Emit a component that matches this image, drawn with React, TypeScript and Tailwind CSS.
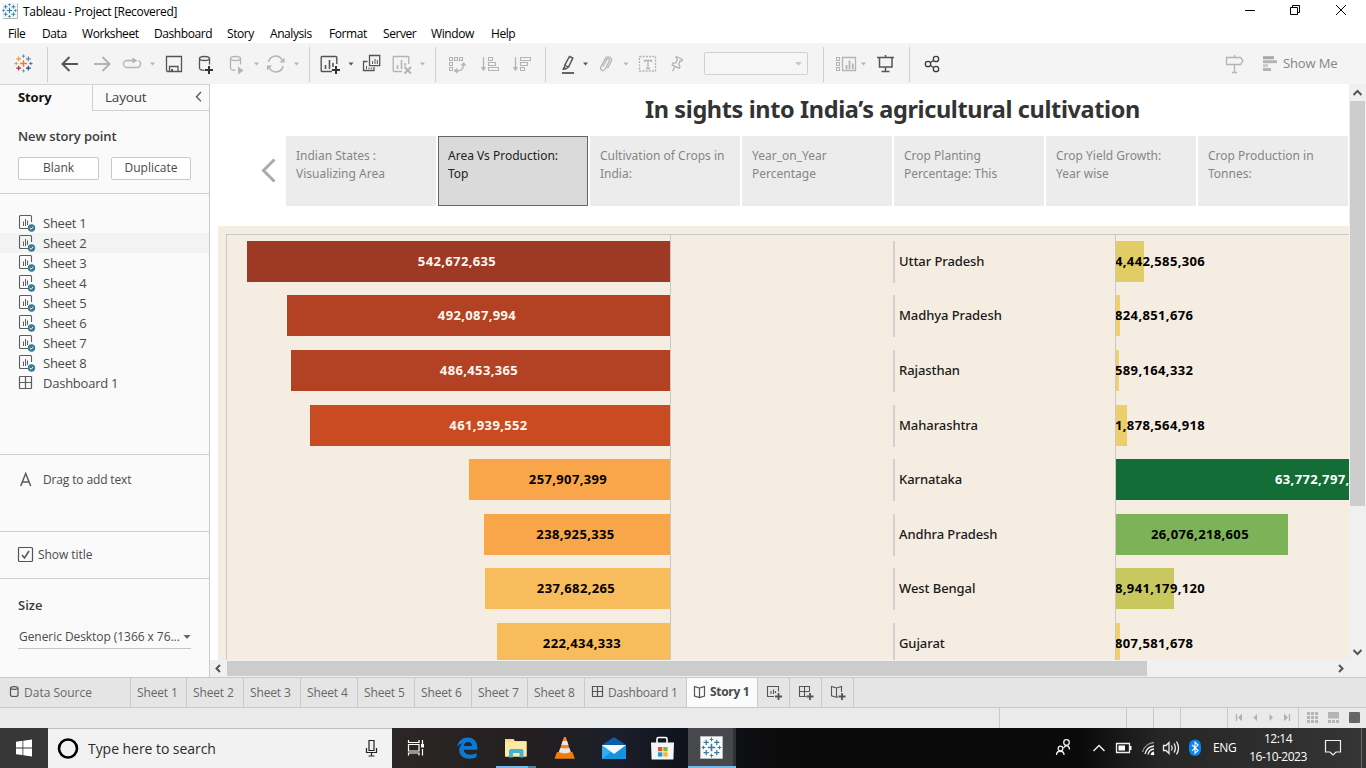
import React from "react";

/* Every glyph uses window coordinates for its viewBox, so cells line up along a bar. */
type IcProps = { x: number; y: number; w: number; h: number; c?: string; sw?: number; children: React.ReactNode };
function Ic({ x, y, w, h, c = "#555555", sw = 1.3, children }: IcProps) {
  return (
    <svg width={w} height={h} viewBox={`${x} ${y} ${w} ${h}`} fill="none" stroke={c} strokeWidth={sw} className="block shrink-0">
      {children}
    </svg>
  );
}

const DARK = "#555555";
const DIM = "#b4b4b4";

type CellProps = { x: number; w: number; c?: string; sw?: number; children?: React.ReactNode };
function Tool(p: CellProps) {
  return <Ic x={p.x} y={43} w={p.w} h={41} c={p.c} sw={p.sw}>{p.children}</Ic>;
}
function Sep({ x }: { x: number }) {
  return <path d={`M${x} 47V82`} stroke="#d0d0d0" strokeWidth="1" />;
}
function Caret({ x, c = DIM, y = 62.5 }: { x: number; c?: string; y?: number }) {
  return <path d={`M${x} ${y}h5l-2.5 3z`} fill={c} stroke="none" />;
}
function Plus({ x, y, r, c, sw }: { x: number; y: number; r: number; c: string; sw: number }) {
  return <path d={`M${x - r} ${y}h${2 * r}M${x} ${y - r}v${2 * r}`} stroke={c} strokeWidth={sw} />;
}

function TableauMark({ cx, cy, k, mono }: { cx: number; cy: number; k: number; mono?: boolean }) {
  const b = "#3d7a99";
  const col = (s: string) => (mono ? b : s);
  return (
    <g>
      <Plus x={cx} y={cy} r={3.2 * k} c={col("#e8762d")} sw={1.3 * k} />
      <Plus x={cx - 4.6 * k} y={cy - 4.4 * k} r={2.3 * k} c={col("#e89b3c")} sw={1.1 * k} />
      <Plus x={cx + 4.6 * k} y={cy - 4.4 * k} r={2.3 * k} c={col("#5b879b")} sw={1.1 * k} />
      <Plus x={cx - 4.6 * k} y={cy + 4.4 * k} r={2.3 * k} c={col("#c72035")} sw={1.1 * k} />
      <Plus x={cx + 4.6 * k} y={cy + 4.4 * k} r={2.3 * k} c={col("#1f447e")} sw={1.1 * k} />
      <Plus x={cx} y={cy - 7 * k} r={1.6 * k} c={col("#5b879b")} sw={0.9 * k} />
      <Plus x={cx} y={cy + 7 * k} r={1.6 * k} c={col("#7099a6")} sw={0.9 * k} />
      <Plus x={cx - 7 * k} y={cy} r={1.6 * k} c={col("#eb912c")} sw={0.9 * k} />
      <Plus x={cx + 7 * k} y={cy} r={1.6 * k} c={col("#5b6591")} sw={0.9 * k} />
    </g>
  );
}

function TitleBar() {
  return (
    <div className="flex h-6 shrink-0 items-start bg-white">
      <Ic x={0} y={0} w={22} h={24}>
        <rect x="2" y="3" width="15.5" height="15.5" fill="#f4f7f8" stroke="none" />
        <path d="M17.5 3.5V18.5H3" stroke="#b5b5b5" strokeWidth="1" />
        <TableauMark cx={9.5} cy={10.5} k={0.85} mono />
      </Ic>
      <span className="ml-px flex-1 pt-[3px] font-['Open_Sans','Noto_Sans',sans-serif] text-[12px] leading-[18px] tracking-[-0.32px] text-black">
        Tableau - Project [Recovered]
      </span>
      <Ic x={1226} y={0} w={140} h={24} c="#000000" sw={1}>
        <path d="M1245 10.5h10" />
        <path d="M1290.500 7.500h7v7h-7zM1292.500 7V5.500h7v7H1298" />
        <path d="M1336 5l10 10M1346 5l-10 10" />
      </Ic>
    </div>
  );
}

const menus = [
  { t: "File", c: "w-[34px]" }, { t: "Data", c: "w-10" }, { t: "Worksheet", c: "w-[72px]" }, { t: "Dashboard", c: "w-[73px]" },
  { t: "Story", c: "w-[43px]" }, { t: "Analysis", c: "w-[59px]" }, { t: "Format", c: "w-[54px]" }, { t: "Server", c: "w-12" },
  { t: "Window", c: "w-[60px]" }, { t: "Help", c: "w-10" },
];
function MenuBar() {
  return (
    <div className="flex h-[19px] shrink-0 bg-white pl-2 font-['Open_Sans','Noto_Sans',sans-serif] text-[12px] leading-5 tracking-[-0.42px] text-black">
      {menus.map((m) => <span key={m.t} className={`${m.c} shrink-0`}>{m.t}</span>)}
    </div>
  );
}

function Toolbar() {
  return (
    <div className="flex h-[41px] shrink-0 items-center bg-[#f4f4f4]">
      <Tool x={0} w={52}><TableauMark cx={23.500} cy={63.500} k={1.05} /><Sep x={47.500} /></Tool>
      <Tool x={52} w={34} sw={2}><path d="M63 64h15M69.500 57l-7 7 7 7" /></Tool>
      <Tool x={86} w={30} c={DIM} sw={2}><path d="M94 64h15M102.500 57l7 7-7 7" /></Tool>
      <Tool x={116} w={44} c={DIM}>
        <path d="M133 60.500h-6a3.500 3.500 0 0 0 0 7h10a3.500 3.500 0 0 0 1.500-6.700" />
        <path d="M132.500 57.500l5 3-5 3z" fill={DIM} stroke="none" /><path d="M128 60.500h6" />
        <Caret x={150} />
      </Tool>
      <Tool x={160} w={30}><path d="M166.500 56.500h15v15h-14l-1-1zM169.500 71v-4.500h8.500v4.500" /><path d="M171 69h2v3h-2z" fill={DARK} stroke="none" /></Tool>
      <Tool x={190} w={32}>
        <ellipse cx="204.500" cy="58.500" rx="5" ry="2" /><path d="M199.500 58.500v9.500c0 1.300 2 2.300 5 2.300M209.500 58.500v6" />
        <Plus x={209} y={70} r={4} c="#333333" sw={2} />
      </Tool>
      <Tool x={222} w={40} c={DIM}>
        <ellipse cx="235.500" cy="58.500" rx="5" ry="2" /><path d="M230.500 58.500v9.500c0 1.300 2 2.300 5 2.300M240.500 58.500v6" />
        <path d="M238 66.500l5.500 4-5.500 4z" fill={DIM} stroke="none" /><Caret x={254} />
      </Tool>
      <Tool x={262} w={50} c={DIM} sw={1.5}>
        <path d="M268.500 62a7.200 7.200 0 0 1 13.500-2M283 66a7.200 7.200 0 0 1-13.500 2" />
        <path d="M284.500 57.500v5h-5zM267 70.500v-5h5z" fill={DIM} stroke="none" />
        <Caret x={294} /><Sep x={309.500} />
      </Tool>
      <Tool x={312} w={46} sw={1.4}>
        <path d="M332 71.500h-10a.8.8 0 0 1-.8-.8V57.300a.8.8 0 0 1 .8-.8h14a.8.8 0 0 1 .8.8V64" />
        <path d="M325.500 65v4M329.500 60v9M333 63v4" strokeWidth="1.600" />
        <Plus x={336} y={70} r={4} c="#333333" sw={2} /><Caret x={348.500} c={DARK} />
      </Tool>
      <Tool x={358} w={28}>
        <path d="M369.500 55.500h10.200v10.200h-10.200z" /><path d="M372.500 61v3M375 59v5M377.300 60v4" strokeWidth="1" />
        <path d="M367.500 61.500h-4v9h10.500v-3.500" /><path d="M366.500 66v3M369 67.500v1.500M371.300 67.500v1.500" strokeWidth="1" />
      </Tool>
      <Tool x={386} w={54} c={DIM}>
        <path d="M402 71.500h-8a.8.8 0 0 1-.8-.8V57.300a.8.8 0 0 1 .8-.8h14a.8.8 0 0 1 .8.8V64" />
        <path d="M397.500 65v4M401.500 60v9M405 63v3" strokeWidth="1.600" />
        <path d="M404.500 67l6.500 6.500M411 67l-6.500 6.500" strokeWidth="2" /><Caret x={420} /><Sep x={435.500} />
      </Tool>
      <Tool x={440} w={34} c={DIM}>
        <path d="M449.500 57.500h3v3h-3zM454.500 57.500h3v3h-3zM459.500 57.500h3v3h-3zM449.500 62.500h3v3h-3zM449.500 67.500h3v3h-3z" strokeWidth="1.100" />
        <path d="M463.500 64.500c0 4-2.500 6.500-7 6.500" /><path d="M460.500 65.500l3.200-3.500 2.800 3.500zM457.500 67.800v6l-4-3z" fill={DIM} stroke="none" />
      </Tool>
      <Tool x={474} w={31} c={DIM}>
        <path d="M483.500 57v13" /><path d="M480.800 67h5.400l-2.700 4.200z" fill={DIM} stroke="none" />
        <path d="M488.500 57.500h4v3h-4zM488.500 62.500h7v3h-7zM488.500 67.500h10v3h-10z" strokeWidth="1.100" />
      </Tool>
      <Tool x={505} w={46} c={DIM}>
        <path d="M515.500 57v13" /><path d="M512.800 67h5.400l-2.700 4.200z" fill={DIM} stroke="none" />
        <path d="M520.500 57.500h10v3h-10zM520.500 62.500h7v3h-7zM520.500 67.500h4v3h-4z" strokeWidth="1.100" /><Sep x={545.500} />
      </Tool>
      <Tool x={551} w={42}>
        <path d="M569.500 56.500l3.300 1.700-4.300 8.800-3 2-1.200-.6.700-3.700z" strokeWidth="1.500" />
        <path d="M564.800 65l3.500 2" /><path d="M563.300 67l2.500 1.700-1.800 1.300h-1.700z" fill={DARK} stroke="none" />
        <path d="M562 73h12" strokeWidth="1.800" /><Caret x={583} c={DARK} />
      </Tool>
      <Tool x={593} w={40} c={DIM}>
        <path d="M603 66.500l3.700-7c1-1.500 3.300-.3 2.600 1.500l-4.300 8.500c-1.500 2.300-5.300.5-4.300-2.200l4.500-8.600c2-3.500 7.500-1 6 2.600l-3.700 7" /><Caret x={623.500} />
      </Tool>
      <Tool x={633} w={30} c={DIM}>
        <rect x="639.500" y="56.500" width="16" height="14.500" strokeDasharray="2 1.200" />
        <path d="M644.500 62v-1.500h7V62M648 60.500v8M646 68.500h4" />
      </Tool>
      <Tool x={663} w={30} c={DIM}>
        <path d="M676.300 56.500l6.200 3-.7 1.500-1.600-.2-1.400 3.300 1.200 2.700-1 1.500-6.800-3.400.7-1.700 3-.4 1.500-3.200-1-1.600zM674.800 66.800l-2.300 4.500" />
      </Tool>
      <Tool x={693} w={135} c="#d0d0d0" sw={1}>
        <rect x="704.500" y="52.500" width="103" height="22" rx="1" fill="#f6f6f6" /><path d="M795 62h7l-3.500 3.800z" fill="#c8c8c8" stroke="none" /><Sep x={823.500} />
      </Tool>
      <Tool x={828} w={42} c={DIM}>
        <path d="M836.500 57.500h3v3h-3zM836.500 62.500h3v3h-3zM836.500 67.500h3v3h-3z" strokeWidth="1.100" />
        <path d="M842.500 57.500h13v13h-13z" /><path d="M846.500 65v4M849.500 60.500v8.500M852.800 63.500v5.500" strokeWidth="1.800" /><Caret x={861} />
      </Tool>
      <Tool x={870} w={44}>
        <path d="M877 57.500h17M879.500 58v9h12.500v-9M885.500 55v2M885.500 67v4M881.500 71.500h8" strokeWidth="1.500" /><Sep x={909.500} />
      </Tool>
      <Tool x={914} w={32} c="#3c3c3c">
        <circle cx="928" cy="64" r="2.700" /><circle cx="936" cy="59" r="2.700" /><circle cx="936" cy="69" r="2.700" /><path d="M930.500 62.500l3-2M930.500 65.500l3 2" />
      </Tool>
      <div className="flex-1" />
      <Tool x={1216} w={40} c={DIM}><path d="M1226.500 57.500h14l2.500 3.300-2.500 3.700h-14zM1234.500 55v2M1234.500 64.500v7.500M1232 72.500h5" /></Tool>
      <Tool x={1256} w={24} sw={3} c={DIM}><path d="M1263 57.700h11" stroke="#a8a8a8" /><path d="M1263 61.700h14" /><path d="M1263 65.600h5" stroke="#cccccc" /><path d="M1263 69.500h8" /></Tool>
      <span className="ml-[3px] w-[83px] font-['Open_Sans','Noto_Sans',sans-serif] text-[13px] tracking-[-0.12px] text-[#868686]">Show Me</span>
    </div>
  );
}

function SheetIcon() {
  return (
    <Ic x={0} y={0} w={43} h={20} c="#5c5c5c" sw={1.100}>
      <path d="M28 15.500h-7.500a1 1 0 0 1-1-1v-11a1 1 0 0 1 1-1H30.500a1 1 0 0 1 1 1V9" />
      <path d="M23.500 8.500v4.500M25.500 6v7M27.500 7.500v4.500" strokeWidth="1" />
      <circle cx="31.500" cy="15" r="3.700" fill="#3a7a92" stroke="none" /><path d="M29.700 15l1.300 1.300 2.300-2.500" stroke="#ffffff" strokeWidth="1" />
    </Ic>
  );
}
const sheets = ["Sheet 1", "Sheet 2", "Sheet 3", "Sheet 4", "Sheet 5", "Sheet 6", "Sheet 7", "Sheet 8"];

function Sidebar() {
  return (
    <aside className="flex w-[210px] shrink-0 flex-col border-r border-[#cacaca] bg-[#fafafa] font-['Open_Sans','Noto_Sans',sans-serif] text-[#4a4a4a]">
      <div className="flex h-[27px] shrink-0 border-t border-[#d4d4d4]">
        <div className="w-[92px] pl-[18px] text-[13px] font-bold leading-[25px] tracking-[-0.1px] text-[#111111]">Story</div>
        <div className="flex flex-1 border-b border-l border-[#d0d0d0] pl-3">
          <span className="flex-1 text-[13.500px] leading-[25px] tracking-[-0.2px] text-[#444444]">Layout</span>
          <Ic x={190} y={85} w={19} h={25} sw={1.300}><path d="M201 92l-4.500 4.700 4.500 4.700" /></Ic>
        </div>
      </div>
      <div className="h-[83px] shrink-0 border-b border-[#cdcdcd] px-[18px] pt-[15px]">
        <div className="text-[13px] font-semibold leading-5 tracking-[-0.1px] text-[#3c3c3c]">New story point</div>
        <div className="mt-[11px] flex gap-3 text-[12px]">
          <div className="h-[23px] w-[81px] rounded-[2px] border border-[#c8c8c8] bg-white text-center leading-5">Blank</div>
          <div className="h-[23px] w-20 rounded-[2px] border border-[#c8c8c8] bg-white text-center leading-5">Duplicate</div>
        </div>
      </div>
      <div className="h-[261px] shrink-0 border-b border-[#cdcdcd] pt-[19px] text-[13px] tracking-[-0.24px]">
        {sheets.map((s, i) => (
          <div key={s} className={i === 1 ? "flex h-5 items-center bg-[#f3f3f3]" : "flex h-5 items-center"}>
            <SheetIcon /><span className="pt-0.5">{s}</span>
          </div>
        ))}
        <div className="flex h-5 items-center">
          <Ic x={0} y={0} w={43} h={20} c="#5c5c5c" sw={1.200}><rect x="19.500" y="3.500" width="12" height="12" rx="0.500" /><path d="M25.500 3v13M19 9.500h13" /></Ic>
          <span className="pt-0.5">Dashboard 1</span>
        </div>
      </div>
      <div className="flex h-[77px] shrink-0 items-start border-b border-[#cdcdcd] pt-[15px] text-[12px] tracking-[-0.14px]">
        <Ic x={0} y={0} w={43} h={20} c="#5c5c5c" sw={1.500}><path d="M20.700 16l5-12.500 5 12.500M22.300 12h6.800" /></Ic>
        <span className="leading-5">Drag to add text</span>
      </div>
      <div className="flex h-[47px] shrink-0 items-center border-b border-[#cdcdcd] text-[12px]">
        <Ic x={0} y={0} w={38} h={20} c="#555555" sw={1.200}><rect x="18.500" y="2.500" width="14" height="14" rx="1" /><path d="M22 10l2.500 3 4.500-7" strokeWidth="1.600" /></Ic>
        <span className="tracking-[-0.05px]">Show title</span>
      </div>
      <div className="flex flex-1 flex-col px-[18px] pt-4">
        <div className="text-[13px] font-semibold leading-5 text-[#3c3c3c]">Size</div>
        <div className="mt-[11px] flex h-[23px] items-center justify-between border-b border-[#c4c4c4] pl-px text-[12px] tracking-[-0.06px]">
          <span className="whitespace-nowrap">Generic Desktop (1366 x 76...</span>
          <Ic x={0} y={0} w={8} h={6}><path d="M0.500 1h7l-3.500 4z" fill="#666666" stroke="none" /></Ic>
        </div>
      </div>
    </aside>
  );
}

const points = [
  ["Indian States :", "Visualizing Area"], ["Area Vs Production:", "Top"], ["Cultivation of Crops in", "India:"],
  ["Year_on_Year", "Percentage"], ["Crop Planting", "Percentage: This"], ["Crop Yield Growth:", "Year wise"], ["Crop Production in", "Tonnes:"],
];

type Row = { state: string; h: number; w: number; c: string; dark?: boolean; area: string; pw: number; pc: string; prod: string; mode?: string };
const rows: Row[] = [
  { state: "Uttar Pradesh", h: 54, w: 423, c: "#9e3926", area: "542,672,635", pw: 28, pc: "#e1cc66", prod: "4,442,585,306" },
  { state: "Madhya Pradesh", h: 55, w: 383, c: "#b24223", area: "492,087,994", pw: 4, pc: "#f0d06a", prod: "824,851,676" },
  { state: "Rajasthan", h: 55, w: 379, c: "#b24223", area: "486,453,365", pw: 3, pc: "#f0d071", prod: "589,164,332" },
  { state: "Maharashtra", h: 54, w: 360, c: "#c94b22", area: "461,939,552", pw: 11, pc: "#edcf69", prod: "1,878,564,918" },
  { state: "Karnataka", h: 55, w: 201, c: "#f9a64b", dark: true, area: "257,907,399", pw: 233, pc: "#146c36", prod: "63,772,797,", mode: "wide" },
  { state: "Andhra Pradesh", h: 54, w: 186, c: "#f9a64b", dark: true, area: "238,925,335", pw: 172, pc: "#7cb358", prod: "26,076,218,605", mode: "mid" },
  { state: "West Bengal", h: 55, w: 185, c: "#f8bc5c", dark: true, area: "237,682,265", pw: 58, pc: "#c9c85e", prod: "8,941,179,120" },
  { state: "Gujarat", h: 55, w: 173, c: "#f8bc5c", dark: true, area: "222,434,333", pw: 4, pc: "#f0d06a", prod: "807,581,678" },
];

function Chart() {
  return (
    <div className="ml-2 flex h-[434px] shrink-0 flex-col overflow-hidden bg-[#f5ede2] pl-2 pt-2">
      <div className="flex h-[426px] overflow-hidden border-l border-t border-[#cbc7c6] font-['Noto_Sans','Open_Sans',sans-serif] text-[13px]">
        <div className="flex w-[444px] shrink-0 flex-col border-r border-[#cbc7c6] pt-1.5">
          {rows.map((r) => (
            <div key={r.state} className="flex shrink-0 justify-end" style={{ height: r.h }}>
              <div className={`flex h-[41px] items-center justify-center pr-[3px] font-bold tracking-[0.36px] ${r.dark ? "text-black" : "text-[#fff8f0]"}`} style={{ width: r.w, backgroundColor: r.c }}>{r.area}</div>
            </div>
          ))}
        </div>
        <div className="flex w-[445px] shrink-0 flex-col border-r border-[#cbc7c6] pl-[222px] pt-1.5">
          {rows.map((r) => (
            <div key={r.state} className="shrink-0" style={{ height: r.h }}>
              <div className="flex h-[42px] items-center border-l-2 border-[#d3d1ce] pl-1 font-medium tracking-[-0.08px] text-[#1a1a1a]">{r.state}</div>
            </div>
          ))}
        </div>
        <div className="flex min-w-0 flex-1 flex-col overflow-hidden pt-1.5 font-bold tracking-[0.36px] text-black">
          {rows.map((r) => (
            <div key={r.state} className="shrink-0" style={{ height: r.h }}>
              <div className={`flex h-[41px] items-center whitespace-nowrap ${r.mode === "mid" ? "justify-center pr-1" : r.mode === "wide" ? "pl-[159px] text-white" : "indent-[-1px]"}`} style={{ width: r.pw, backgroundColor: r.pc }}>{r.prod}</div>
            </div>
          ))}
        </div>
      </div>
    </div>
  );
}

function Story() {
  return (
    <main className="flex min-w-0 flex-1 flex-col">
      <div className="flex min-h-0 flex-1">
        <div className="flex w-[1139px] shrink-0 flex-col overflow-hidden bg-white">
          <h1 className="h-[52px] shrink-0 pl-[435px] pt-[9px] font-['Noto_Sans','Open_Sans',sans-serif] text-[23.500px] font-bold leading-8 tracking-[-0.39px] whitespace-nowrap text-[#333333]">
            In sights into India’s agricultural cultivation
          </h1>
          <div className="flex h-[90px] shrink-0 items-start">
            <Ic x={210} y={136} w={76} h={70} c="#ababab" sw={3}><path d="M274.500 159.500l-11 11 11 11" /></Ic>
            <div className="flex gap-0.5 font-['Noto_Sans','Open_Sans',sans-serif] text-[12px] leading-[18px]">
              {points.map((p, i) => (
                <div key={p[0]} className={`h-[70px] w-[150px] shrink-0 border pl-[9px] pt-2.5 whitespace-nowrap ${i === 1 ? "border-[#666666] bg-[#dadada] text-[#222222]" : "border-[#ececec] bg-[#ececec] text-[#868686]"}`}>
                  <div>{p[0]}</div><div>{p[1]}</div>
                </div>
              ))}
            </div>
          </div>
          <Chart />
        </div>
        <div className="flex w-[17px] shrink-0 flex-col bg-[#f0f0f0] pl-px">
          <Ic x={1350} y={84} w={16} h={17} sw={2}><path d="M1353.500 95l4-4 4 4" /></Ic>
          <div className="h-[405px] w-[15px] bg-[#cdcdcd]" />
          <div className="flex-1" />
          <Ic x={1350} y={643} w={16} h={17} sw={2}><path d="M1353.500 650l4 4 4-4" /></Ic>
        </div>
      </div>
      <div className="flex h-[17px] shrink-0 bg-[#f0f0f0] pt-px">
        <Ic x={210} y={661} w={17} h={16} sw={2}><path d="M220 665l-3.500 3.500 3.500 3.500" /></Ic>
        <div className="h-[15px] w-[920px] bg-[#cccccc]" />
        <div className="flex-1" />
        <Ic x={1330} y={661} w={36} h={16} sw={2}><path d="M1339 665l3.500 3.500-3.500 3.500" /></Ic>
      </div>
    </main>
  );
}

const tabs = [
  { t: "Sheet 1", c: "w-14" }, { t: "Sheet 2", c: "w-[57px]" }, { t: "Sheet 3", c: "w-[57px]" }, { t: "Sheet 4", c: "w-[57px]" },
  { t: "Sheet 5", c: "w-[57px]" }, { t: "Sheet 6", c: "w-[57px]" }, { t: "Sheet 7", c: "w-14" }, { t: "Sheet 8", c: "w-[57px]" },
];
function Book({ x, y }: { x: number; y: number }) {
  return <path d={`M${x} ${y}l5 1.500 5-1.500v9.500l-5 1.500-5-1.500zM${x + 5} ${y + 1.500}v9.500`} />;
}
function SheetTabs() {
  return (
    <div className="flex h-[31px] shrink-0 border-y border-[#c9c9c9] bg-[#e5e5e5] font-['Open_Sans','Noto_Sans',sans-serif] text-[12px] leading-[29px] text-[#686868]">
      <div className="flex w-[131px] shrink-0 border-r border-[#c9c9c9]">
        <Ic x={0} y={678} w={24} h={29} sw={1.200}><path d="M10.500 688.200v7c0 1.700 7.500 1.700 7.500 0v-7" /><ellipse cx="14.200" cy="688" rx="3.700" ry="1.400" /></Ic>
        <span>Data Source</span>
      </div>
      {tabs.map((t) => <div key={t.t} className={`${t.c} shrink-0 border-r border-[#c9c9c9] pl-1.5 tracking-[-0.15px] whitespace-nowrap`}>{t.t}</div>)}
      <div className="flex w-[102px] shrink-0 border-r border-[#c9c9c9] tracking-[-0.2px] whitespace-nowrap">
        <Ic x={585} y={678} w={23} h={29} sw={1.200}><path d="M592.500 686.500h10v10h-10zM597.500 686.500v10M592.500 691.500h10" /></Ic>
        <span>Dashboard 1</span>
      </div>
      <div className="flex w-[71px] shrink-0 border-r border-[#c9c9c9] bg-[#fbfbfb] font-bold leading-[27px] tracking-[-0.3px] whitespace-nowrap text-[#4a4a4a]">
        <Ic x={687} y={678} w={23} h={29} sw={1.200}><Book x={694.500} y={686.500} /></Ic>
        <span>Story 1</span>
      </div>
      <div className="w-8 shrink-0 border-r border-[#c9c9c9]">
        <Ic x={758} y={678} w={31} h={29} sw={1.100}><path d="M774 696.500h-6.500v-10h11v5" /><path d="M771 691v3M773.500 689.500v4.500M775.500 691v2" /><Plus x={778.500} y={696.500} r={3.500} c={DARK} sw={1.800} /></Ic>
      </div>
      <div className="w-8 shrink-0 border-r border-[#c9c9c9]">
        <Ic x={790} y={678} w={31} h={29} sw={1.100}><path d="M806 696.500h-6.500v-10h10v5M804.500 686.500v10M799.500 691.500h10" /><Plus x={810} y={696.500} r={3.500} c={DARK} sw={1.800} /></Ic>
      </div>
      <div className="w-8 shrink-0 border-r border-[#c9c9c9]">
        <Ic x={822} y={678} w={31} h={29} sw={1.100}><path d="M838 697l-1.500.3-5-1.500v-9.300l5 1.500 5-1.500v5.500M836.500 688v9" /><Plus x={842} y={696.500} r={3.500} c={DARK} sw={1.800} /></Ic>
      </div>
    </div>
  );
}

function StatusBar() {
  return (
    <div className="flex h-5 shrink-0 justify-end bg-[#eaeaea]">
      <div className="w-[127px] border-l border-[#c9c9c9]" />
      <div className="w-[27px] border-l border-[#c9c9c9]" />
      <div className="w-[27px] border-l border-[#c9c9c9]" />
      <div className="w-[47px] border-l border-[#c9c9c9]" />
      <div className="w-[71px] border-l border-[#c9c9c9]">
        <Ic x={1228} y={708} w={70} h={20} c="#b0b0b0">
          <path d="M1236.500 714v7M1289.500 714v7" />
          <path d="M1242 713.800v7.400l-4-3.700zM1257 714v7l-3.500-3.500zM1269.500 714v7l3.500-3.500zM1284 713.800v7.400l4-3.700z" fill="#b0b0b0" stroke="none" />
        </Ic>
      </div>
      <div className="w-[68px] border-l border-[#c9c9c9]">
        <Ic x={1299} y={708} w={67} h={20}>
          <path d="M1307 713.500h11M1307 717.500h11M1307 721.500h11" stroke="#b5b5b5" strokeWidth="3" strokeDasharray="3 1" />
          <path d="M1328 712h11v6.500h-11z" fill="#b5b5b5" stroke="none" /><path d="M1328 721.500h11" stroke="#b5b5b5" strokeWidth="3" strokeDasharray="3 1" />
          <rect x="1349" y="712" width="11" height="11" rx="1" fill="#666666" stroke="none" />
        </Ic>
      </div>
    </div>
  );
}

function Task({ x, w, children }: { x: number; w: number; children: React.ReactNode }) {
  return <Ic x={x} y={728} w={w} h={40} c="#f0f0f0">{children}</Ic>;
}

function Taskbar() {
  return (
    <div className="flex h-10 shrink-0 items-center bg-[linear-gradient(90deg,#2b2625_0,#2b2625_410px,#241f20_520px,#1b1e2a_620px,#10121c_680px,#0e0f12_740px,#0a0a0a_800px,#0a0a0b_1080px,#262626_1160px,#353535_1366px)] font-['Open_Sans','Noto_Sans',sans-serif] text-white">
      <div className="h-10 w-12 shrink-0 bg-[#373737]">
        <Task x={0} w={48}><path d="M16 741.700l6.500-.9v6.700H16zM23.300 740.700l8.700-1.200v8H23.300zM16 748.400h6.500v6.700l-6.500-.9zM23.300 748.400H32v8l-8.700-1.200z" fill="#ffffff" stroke="none" /></Task>
      </div>
      <div className="flex h-10 w-[344px] shrink-0 items-center border-t border-[#bdbdbd] bg-[#f2f2f2]">
        <Task x={48} w={40}><circle cx="68" cy="747.500" r="9" stroke="#000000" strokeWidth="2.600" /></Task>
        <span className="flex-1 text-[14px] tracking-[-0.05px] text-[#2c2c2c]">Type here to search</span>
        <Task x={356} w={36}><path d="M369 739.500h5v10h-5zM366.500 747v4.500h10V747M371.500 751.500v3.500M368.500 755h6" stroke="#222222" strokeWidth="1.200" /></Task>
      </div>
      <Task x={392} w={50}>
        <path d="M408.500 744.500h10.500v6.500h-10.500zM408.500 740v2.500h10.500V740M408.500 755.500V753h10.500v2.500M422.500 740v4M422.500 749v6.500" stroke="#ffffff" strokeWidth="1.200" /><path d="M421 744h3v3.500h-3z" fill="#ffffff" stroke="none" />
      </Task>
      <Task x={442} w={48}>
        <path d="M457 747.200c.8-5.200 4.700-9.700 10.600-9.700 6.300 0 9.700 4.600 9.700 9.500v2.700h-13.600c.3 3.500 3.200 4.900 6.600 4.900 2.600 0 4.600-.7 6.200-1.700v4.200c-1.700 1-4.400 1.700-7.300 1.700-6.300 0-10-3.700-10-8.700 0-3 1.500-5.600 4-7.100-2.700.7-4.900 2.200-6.200 4.200zM463.800 746h8.200c0-2.200-1.100-4-3.800-4-2.400 0-4 1.600-4.400 4z" fill="#0b7ad6" stroke="none" />
      </Task>
      <Task x={490} w={50}>
        <path d="M505 739h8.500l1.500 2H526.500v15.500H505z" fill="#f9dc85" stroke="none" /><path d="M505 742h21.500v14.500H505z" fill="#fde9a6" stroke="none" />
        <path d="M509 757.500v-6.500q0-2 2-2h10.500q2 0 2 2v6.500h-4V753h-6.500v4.500z" fill="#45b1d8" stroke="none" />
        <path d="M496 766h32v2h-32z" fill="#76b9ed" stroke="none" /><path d="M528 766h8v2h-8z" fill="#53809f" stroke="none" />
      </Task>
      <Task x={540} w={50}>
        <path d="M557 752h15.500l2.300 6.800h-20.300z" fill="#f07c0c" stroke="none" />
        <path d="M564 737h1.800l5 15.500q-6 3-12 0z" fill="#f28a1c" stroke="none" />
        <path d="M562.700 741h4.400l1.300 4h-7.100zM560.200 748.300h9.300l1.200 3.700q-6 2.500-11.700 0z" fill="#e8e8e8" stroke="none" />
      </Task>
      <Task x={590} w={49}>
        <path d="M602 745l12-8 12 8v5h-24z" fill="#0a5fa8" stroke="none" />
        <path d="M602 745h24v14h-24z" fill="#2eaef2" stroke="none" />
        <path d="M602 759l10-8 14-6v14z" fill="#1693e0" stroke="none" />
        <path d="M602 745h24l-12 9z" fill="#f4f9fd" stroke="none" />
      </Task>
      <Task x={639} w={49}>
        <path d="M657 743.500v-4.500q0-1.500 1.500-1.500h7q1.500 0 1.500 1.500v4.500" stroke="#ffffff" strokeWidth="1.600" /><path d="M651 742.500h23l-.6 17h-21.800z" fill="#f5f5f5" stroke="none" />
        <path d="M658 747h4.300v4.300H658z" fill="#e6502a" stroke="none" /><path d="M663.300 747h4.300v4.300h-4.300z" fill="#7db928" stroke="none" />
        <path d="M658 752.300h4.300v4.300H658z" fill="#1a9be0" stroke="none" /><path d="M663.300 752.300h4.300v4.300h-4.300z" fill="#f9b51b" stroke="none" />
      </Task>
      <Task x={688} w={48}>
        <path d="M688 728h45v40h-45z" fill="#47484b" stroke="none" /><path d="M733 728h3v40h-3z" fill="#303236" stroke="none" />
        <path d="M700.500 736.500h22v22h-22z" fill="#f8fafb" stroke="#b8bcc0" strokeWidth="1" /><TableauMark cx={711.500} cy={747.500} k={1.150} mono />
        <path d="M688 766h48v2h-48z" fill="#76b9ed" stroke="none" />
      </Task>
      <div className="flex-1" />
      <Task x={1046} w={36}>
        <circle cx="1066.500" cy="742.500" r="2.800" /><circle cx="1060.500" cy="748.500" r="2.300" /><path d="M1056.500 755c0-5 7.500-5 7.500 0M1063.500 748c2-3.500 6-2.500 6 1.500" />
      </Task>
      <Task x={1082} w={28}><path d="M1093.500 751l5.500-5.500 5.500 5.500" strokeWidth="1.400" /></Task>
      <Task x={1110} w={27}><path d="M1116.500 743.500h13v9h-13z" /><path d="M1118.500 745.500h6.500v5h-6.500zM1130 746h1.500v4h-1.500z" fill="#ffffff" stroke="none" /></Task>
      <Task x={1137} w={22}>
        <path d="M1142.500 752a13 13 0 0 1 11.500-9.500" stroke="#999999" /><path d="M1145 754a10.500 10.500 0 0 1 9-8M1148 754.500a7 7 0 0 1 6-5.500M1151 755a4 4 0 0 1 3-3" /><circle cx="1153" cy="754" r="1.300" fill="#ffffff" stroke="none" />
      </Task>
      <Task x={1159} w={25}><path d="M1163.500 745.500h2.500l3-3v11l-3-3h-2.500zM1171.500 745.500q1.500 2.500 0 5M1174 743.500q2.700 4.500 0 9M1176.500 741.500q4 6.500 0 13" /></Task>
      <Task x={1184} w={29}><rect x="1189" y="739.500" width="12" height="16.500" rx="6" fill="#0a84f0" stroke="none" /><path d="M1192 744.800l6 5.700-3 2.800v-11l3 2.800-6 5.700" stroke="#ffffff" strokeWidth="1.100" /></Task>
      <span className="w-[31px] shrink-0 text-[12px] tracking-[-0.4px]">ENG</span>
      <div className="flex w-[68px] shrink-0 flex-col items-center text-[12px] leading-[18px] tracking-[-0.5px] whitespace-nowrap"><span>12:14</span><span>16-10-2023</span></div>
      <Task x={1312} w={54}><path d="M1325.500 740.500h15v11.500h-4.500l-3 3-3-3h-4.500z" strokeWidth="1.200" /><path d="M1361.500 728v40" stroke="#6a6a6a" strokeWidth="1" /></Task>
    </div>
  );
}

export default function App() {
  return (
    <div className="flex h-[768px] w-[1366px] flex-col overflow-hidden bg-white">
      <TitleBar />
      <MenuBar />
      <Toolbar />
      <div className="flex h-[593px] shrink-0">
        <Sidebar />
        <Story />
      </div>
      <SheetTabs />
      <StatusBar />
      <Taskbar />
    </div>
  );
}
